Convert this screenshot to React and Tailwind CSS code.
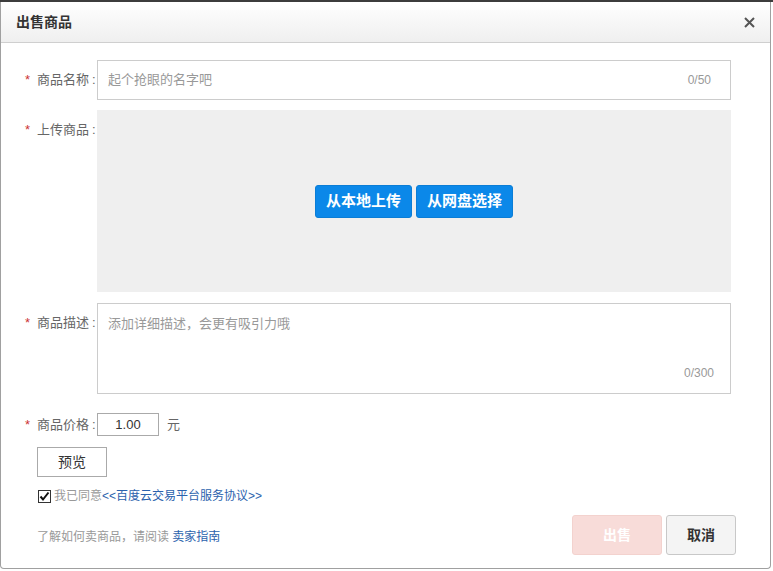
import React from "react";

const font = { fontFamily: '"Liberation Sans", "Noto Sans CJK SC", sans-serif' };

function Label({ children, className = "" }) {
  return (
    <div className={"flex w-[96px] shrink-0 items-center whitespace-nowrap pl-[24px] text-[13px] text-[#666] " + className}>
      <span className="w-[12px] text-[#c33] text-[13px]">*</span>
      <span>{children}</span>
      <span className="ml-[3px]">:</span>
    </div>
  );
}

export default function App() {
  return (
    <div className="w-[773px] h-[571px] bg-white overflow-hidden" style={font}>
      <div className="h-[2px] bg-[#3c3c3c]" />
      <div className="w-[771px] h-[567px] border border-t-0 border-[#a0a0a0] rounded-b-[4px] flex flex-col">
        <div className="h-[41px] shrink-0 flex items-center justify-between pl-[15px] pr-[15px] bg-gradient-to-b from-white to-[#efefef] border-b border-[#cfcfcf]">
          <span className="text-[14px] font-bold text-[#333]">出售商品</span>
          <svg width="11" height="11" viewBox="0 0 11 11">
            <path d="M1 1 L10 10 M10 1 L1 10" stroke="#555" strokeWidth="2" />
          </svg>
        </div>
        <div className="flex flex-col pt-[17px]">
          <div className="flex">
            <Label className="h-[40px]">商品名称</Label>
            <div className="w-[634px] h-[40px] border border-[#ccc] flex items-center justify-between pl-[10px] pr-[19px] text-[13px] text-[#999]">
              <span>起个抢眼的名字吧</span>
              <span className="text-[12px]">0/50</span>
            </div>
          </div>
          <div className="flex mt-[10px]">
            <Label className="h-[40px] items-start pt-[10px]">上传商品</Label>
            <div className="w-[634px] h-[182px] bg-[#efefef] flex items-center justify-center gap-[4px]">
              <button className="w-[97px] h-[33px] rounded-[3px] bg-[#0b88e9] border border-[#0a7dd6] text-white text-[15px] font-bold">从本地上传</button>
              <button className="w-[97px] h-[33px] rounded-[3px] bg-[#0b88e9] border border-[#0a7dd6] text-white text-[15px] font-bold">从网盘选择</button>
            </div>
          </div>
          <div className="flex mt-[11px]">
            <Label className="h-[40px] items-start pt-[10px]">商品描述</Label>
            <div className="w-[634px] h-[91px] border border-[#ccc] flex flex-col justify-between pl-[10px] pr-[16px] pt-[10px] pb-[11px] text-[13px] text-[#999]">
              <span>添加详细描述，会更有吸引力哦</span>
              <span className="self-end text-[12px]">0/300</span>
            </div>
          </div>
          <div className="flex items-center mt-[19px]">
            <Label className="h-[23px]">商品价格</Label>
            <div className="w-[62px] h-[23px] border border-[#aaa] flex items-center justify-center text-[13px] text-[#333]">1.00</div>
            <span className="ml-[8px] text-[13px] text-[#666]">元</span>
          </div>
          <div className="pl-[36px] mt-[11px]">
            <button className="w-[70px] h-[30px] border border-[#aaa] bg-white text-[14px] text-[#333]">预览</button>
          </div>
          <div className="pl-[37px] mt-[10px] flex items-center text-[12px]">
            <span className="w-[13px] h-[13px] border border-[#333] bg-white flex items-center justify-center">
              <svg width="11" height="11" viewBox="0 0 11 11">
                <path d="M1.5 5.5 L4 8.5 L9.5 1.5" fill="none" stroke="#111" strokeWidth="2" />
              </svg>
            </span>
            <span className="ml-[3px] text-[#999]">我已同意</span>
            <span className="text-[#2b62ad]">&lt;&lt;百度云交易平台服务协议&gt;&gt;</span>
          </div>
          <div className="flex items-center justify-between pl-[36px] pr-[34px] mt-[10px]">
            <span className="text-[12px] text-[#999] mt-[4px]">
              了解如何卖商品，请阅读 <span className="text-[#2b62ad]">卖家指南</span>
            </span>
            <div className="flex gap-[4px]">
              <button className="w-[90px] h-[40px] rounded-[3px] bg-[#f8dcd9] border border-[#f3d2ce] text-white text-[14px] font-bold">出售</button>
              <button className="w-[70px] h-[40px] rounded-[3px] bg-[#f4f4f4] border border-[#c8c8c8] text-[#333] text-[14px] font-bold">取消</button>
            </div>
          </div>
        </div>
      </div>
    </div>
  );
}
